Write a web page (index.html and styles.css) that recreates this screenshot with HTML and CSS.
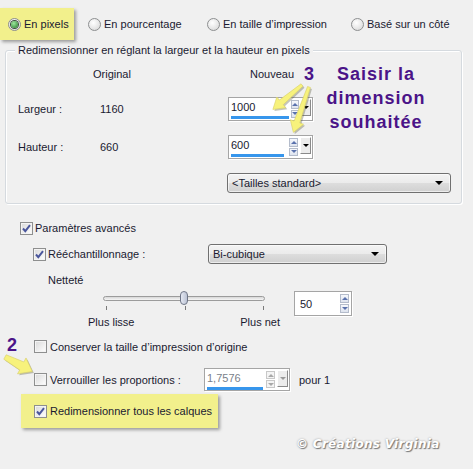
FILE: index.html
```html
<!DOCTYPE html>
<html lang="fr">
<head>
    <meta charset="UTF-8">
    <meta name="viewport" content="width=device-width, initial-scale=1.0">
    <title>Redimensionner</title>
    <link rel="stylesheet" href="styles.css">
</head>
<body>
<div class="dialog">
    <div class="modes">
        <label class="mode mode-on"><span class="radio on"></span>En pixels</label>
        <label class="mode"><span class="radio"></span>En pourcentage</label>
        <label class="mode"><span class="radio"></span>En taille d’impression</label>
        <label class="mode"><span class="radio"></span>Basé sur un côté</label>
    </div>

    <div class="group">
        <div class="group-title">Redimensionner en réglant la largeur et la hauteur en pixels</div>
        <div class="head-row"><span class="col-orig">Original</span><span>Nouveau</span></div>
        <div class="size-row">
            <span class="lbl">Largeur :</span><span class="val">1160</span>
            <div class="spin spin-size">
                <div class="spin-field"><span>1000</span><span class="bar" style="width:58px"></span></div>
                <div class="arrows"><span class="up"></span><span class="dn"></span></div>
                <span class="drop"></span>
            </div>
        </div>
        <div class="size-row row-gap">
            <span class="lbl">Hauteur :</span><span class="val">660</span>
            <div class="spin spin-size">
                <div class="spin-field"><span>600</span><span class="bar" style="width:53px"></span></div>
                <div class="arrows"><span class="up"></span><span class="dn"></span></div>
                <span class="drop"></span>
            </div>
        </div>
        <div class="preset-row">
            <div class="select select-preset">&lt;Tailles standard&gt;<span class="caret"></span></div>
        </div>
    </div>

    <div class="opt opt-adv">
        <span class="check on"><svg viewBox="0 0 11 11"><path d="M2 5.5l2.3 2.6L9 2.2"/></svg></span>Paramètres avancés
    </div>
    <div class="opt opt-resample">
        <span class="opt-label"><span class="check on"><svg viewBox="0 0 11 11"><path d="M2 5.5l2.3 2.6L9 2.2"/></svg></span>Rééchantillonnage :</span>
        <div class="select select-method">Bi-cubique<span class="caret"></span></div>
    </div>
    <div class="opt opt-sharp">Netteté</div>
    <div class="slider-row">
        <div class="slider">
            <div class="track-area">
                <div class="track"></div>
                <span class="thumb"></span>
            </div>
            <div class="ticks"><i></i><i></i><i></i></div>
            <div class="slider-labels"><span>Plus lisse</span><span>Plus net</span></div>
        </div>
        <div class="spin spin-small">
            <div class="spin-field"><span>50</span></div>
            <div class="arrows"><span class="up"></span><span class="dn"></span></div>
        </div>
    </div>
    <div class="opt opt-keep">
        <span class="check"></span>Conserver la taille d’impression d’origine
    </div>
    <div class="opt opt-lock">
        <span class="opt-label"><span class="check"></span>Verrouiller les proportions :</span>
        <div class="spin spin-ratio">
            <div class="spin-field dim"><span>1,7576</span><span class="bar" style="width:56px"></span></div>
            <div class="arrows off"><span class="up"></span><span class="dn"></span></div>
            <span class="drop off"></span>
        </div>
        <span class="pour">pour 1</span>
    </div>
    <div class="opt opt-layers">
        <span class="check on"><svg viewBox="0 0 11 11"><path d="M2 5.5l2.3 2.6L9 2.2"/></svg></span>Redimensionner tous les calques
    </div>
    <div class="watermark">© Créations Virginia</div>

    <!-- annotations over the dialog -->
    <div class="note note3">
        <span class="num">3</span>
        <span class="note-text">Saisir la<br>dimension<br>souhaitée</span>
    </div>
    <div class="note note2">2</div>
    <svg class="arrows-layer" width="473" height="469" viewBox="0 0 473 469">
        <g class="shade" transform="translate(1.5 1.5)">
            <polygon transform="translate(302 85) rotate(140)" points="0,-1.5 27,-3 27,-7 38,0 27,7 27,3 0,1.5"/>
            <polygon transform="translate(309 87) rotate(109)" points="0,-1.5 37,-3 37,-7 48,0 37,7 37,3 0,1.5"/>
            <polygon transform="translate(5 357) rotate(28)" points="0,-2.5 19,-4.5 19,-9 31,0 19,9 19,4.5 0,2.5"/>
        </g>
        <g class="arrow">
            <polygon transform="translate(302 85) rotate(140)" points="0,-1.5 27,-3 27,-7 38,0 27,7 27,3 0,1.5"/>
            <polygon transform="translate(309 87) rotate(109)" points="0,-1.5 37,-3 37,-7 48,0 37,7 37,3 0,1.5"/>
            <polygon transform="translate(5 357) rotate(28)" points="0,-2.5 19,-4.5 19,-9 31,0 19,9 19,4.5 0,2.5"/>
        </g>
    </svg>
</div>
</body>
</html>
```

FILE: styles.css
```css
body {
    margin: 0;
    background: #f0f0f0;
    font-family: "Liberation Sans", Arial, sans-serif;
    font-size: 11px;
    color: #1a1a30;
}
.dialog {
    position: relative;
    width: 473px;
    height: 469px;
    overflow: hidden;
}

/* mode radios */
.modes {
    display: grid;
    grid-template-columns: 88px 119px 144px auto;
    padding-top: 8px;
    height: 32px;
}
.mode {
    display: flex;
    align-items: center;
}
.mode-on {
    width: 74px;
    padding-left: 8px;
    box-sizing: border-box;
    background: #f2f08c;
    box-shadow: 2px 2px 3px rgba(0, 0, 0, 0.35);
}
.radio {
    width: 13px;
    height: 13px;
    margin-right: 3px;
    border: 1px solid #8d8f90;
    border-radius: 50%;
    box-sizing: border-box;
    background: radial-gradient(circle at 40% 35%, #ffffff, #d4d4d4);
    display: flex;
    align-items: center;
    justify-content: center;
}
.radio.on::after {
    content: "";
    width: 7px;
    height: 7px;
    border-radius: 50%;
    background: radial-gradient(circle at 40% 35%, #9ee79e, #1f7a26);
    box-shadow: 0 0 0 1px #3c4c3c;
}

/* group box */
.group {
    margin: 10px 0 0 5px;
    width: 457px;
    box-sizing: border-box;
    border: 1px solid #d5dadf;
    border-radius: 3px;
    box-shadow: inset 1px 1px 0 #fff, 1px 1px 0 #fff;
    padding-bottom: 10px;
}
.group-title {
    display: table;
    margin: -8px 0 0 9px;
    padding: 0 3px;
    line-height: 14px;
    background: #f0f0f0;
}
.head-row {
    display: flex;
    margin-top: 10px;
    padding-left: 87px;
    line-height: 14px;
}
.col-orig {
    width: 157px;
}
.size-row {
    display: flex;
    align-items: center;
    height: 24px;
    margin-top: 16px;
    padding-left: 12px;
}
.size-row.row-gap {
    margin-top: 14px;
}
.lbl {
    width: 82px;
}
.val {
    width: 128px;
}
.preset-row {
    margin-top: 14px;
    padding-left: 221px;
}

/* spin boxes */
.spin {
    display: flex;
    box-sizing: border-box;
    border: 1px solid #a5a5a5;
    background: #fff;
    box-shadow: 1px 1px 0 #fff;
}
.spin-size {
    width: 85px;
    height: 24px;
}
.spin-small {
    width: 58px;
    height: 25px;
    margin-left: 14px;
}
.spin-ratio {
    width: 86px;
    height: 23px;
}
.spin-field {
    flex: 1;
    display: flex;
    flex-direction: column;
    justify-content: center;
    padding: 2px 1px 0 2px;
}
.spin-field span:first-child {
    line-height: 13px;
}
.spin-small .spin-field {
    padding-left: 5px;
}
.spin-field.dim {
    color: #7a7f8a;
}
.bar {
    height: 3px;
    margin-top: 2px;
    background: #3796ec;
}
.arrows {
    display: flex;
    flex-direction: column;
    gap: 1px;
    width: 9px;
    margin: 2px 2px 2px 1px;
}
.arrows span {
    flex: 1;
    border: 1px solid #b4bccb;
    background: linear-gradient(#f6f8fc, #dde3ee);
    display: flex;
    align-items: center;
    justify-content: center;
}
.arrows .up::after {
    content: "";
    border: 3px solid transparent;
    border-top: 0;
    border-bottom: 3px solid #5a72ad;
}
.arrows .dn::after {
    content: "";
    border: 3px solid transparent;
    border-bottom: 0;
    border-top: 3px solid #5a72ad;
}
.arrows.off span {
    border-color: #c8c8c8;
    background: #f4f4f4;
}
.arrows.off .up::after {
    border-bottom-color: #a8a8a8;
}
.arrows.off .dn::after {
    border-top-color: #a8a8a8;
}
.drop {
    width: 11px;
    height: 17px;
    margin: 1px 1px 0 0;
    box-sizing: border-box;
    border: 1px solid #8a8a8a;
    border-top-color: #fff;
    border-left-color: #fff;
    background: #ececec;
    display: flex;
    align-items: center;
    justify-content: center;
}
.drop::after {
    content: "";
    border: 3px solid transparent;
    border-bottom: 0;
    border-top: 3px solid #000;
}
.drop.off::after {
    border-top-color: #9a9a9a;
}

/* dropdowns */
.select {
    display: flex;
    align-items: center;
    height: 20px;
    box-sizing: border-box;
    padding: 0 7px 0 4px;
    border: 1px solid #707070;
    border-radius: 3px;
    background: linear-gradient(#f3f3f3 0%, #ebebeb 50%, #dddddd 51%, #d0d0d0 100%);
    box-shadow: inset 0 0 0 1px rgba(255, 255, 255, 0.6);
}
.select-preset {
    width: 224px;
}
.select-method {
    width: 179px;
}
.caret {
    margin-left: auto;
    border: 4px solid transparent;
    border-bottom: 0;
    border-top: 4px solid #000;
}

/* checkbox rows */
.opt {
    display: flex;
    align-items: center;
}
.check {
    width: 13px;
    height: 13px;
    flex-shrink: 0;
    margin-right: 3px;
    box-sizing: border-box;
    border: 1px solid #8e8f8f;
    background: linear-gradient(135deg, #d9d9d9, #ffffff);
    box-shadow: inset 0 0 0 1px #f4f4f4;
}
.check svg {
    display: block;
    width: 11px;
    height: 11px;
}
.check path {
    fill: none;
    stroke: #4a569c;
    stroke-width: 2;
}
.opt-adv {
    margin-top: 14px;
    height: 20px;
    padding-left: 20px;
}
.opt-adv .check {
    margin-right: 2px;
}
.opt-resample {
    margin-top: 6px;
    height: 20px;
    padding-left: 33px;
}
.opt-label {
    display: flex;
    align-items: center;
}
.opt-resample .opt-label {
    width: 175px;
}
.opt-resample .check {
    margin-right: 2px;
}
.opt-sharp {
    margin-top: 9px;
    height: 14px;
    padding-left: 48px;
}

/* slider */
.slider-row {
    display: flex;
    align-items: flex-start;
    margin-top: 4px;
    padding-left: 88px;
}
.slider {
    width: 192px;
}
.track-area {
    position: relative;
    height: 14px;
    padding: 0 15px;
    display: flex;
    align-items: center;
}
.track {
    flex: 1;
    height: 5px;
    box-sizing: border-box;
    border: 1px solid #9c9c9c;
    border-radius: 3px;
    background: linear-gradient(#d8d8d8, #f6f6f6);
}
.thumb {
    position: absolute;
    left: 92px;
    top: 0;
    width: 8px;
    height: 14px;
    box-sizing: border-box;
    border: 1px solid #6e7586;
    border-radius: 4px;
    background: linear-gradient(90deg, #e4e8f2, #bcc3d4);
}
.ticks {
    display: flex;
    justify-content: space-between;
    height: 4px;
    margin-top: 1px;
    padding: 0 16px 0 18px;
}
.ticks i {
    width: 1px;
    background: #7a7a7a;
}
.slider-labels {
    display: flex;
    justify-content: space-between;
    margin-top: 5px;
    line-height: 14px;
}

.opt-keep {
    margin-top: 11px;
    height: 13px;
    padding-left: 34px;
}
.opt-lock {
    margin-top: 15px;
    height: 23px;
    padding-left: 34px;
}
.opt-lock .opt-label {
    width: 170px;
}
.pour {
    margin-left: 9px;
}
.opt-layers {
    margin: 3px 0 0 21px;
    width: 197px;
    height: 34px;
    padding-left: 13px;
    box-sizing: border-box;
    background: #f2f08c;
    box-shadow: 2px 2px 3px rgba(0, 0, 0, 0.35);
}

.watermark {
    margin-top: 9px;
    padding-left: 296px;
    font-family: "DejaVu Sans", sans-serif;
    font-size: 12px;
    font-weight: bold;
    font-style: italic;
    letter-spacing: 0.3px;
    color: #fff;
    text-shadow: 1px 1px 1px #777, 0 0 2px #999;
}

/* annotations */
.note {
    position: absolute;
    font-family: "Liberation Sans", Arial, sans-serif;
    font-weight: bold;
    color: #4b1488;
}
.note3 {
    left: 304px;
    top: 62px;
    display: flex;
    align-items: flex-start;
    font-size: 18px;
    line-height: 24px;
}
.note-text {
    width: 106px;
    margin-left: 9px;
    text-align: center;
    letter-spacing: 1px;
}
.note2 {
    left: 7px;
    top: 335px;
    font-size: 18px;
    line-height: 20px;
}
.arrows-layer {
    position: absolute;
    left: 0;
    top: 0;
    pointer-events: none;
}
.arrows-layer .shade polygon {
    fill: rgba(90, 90, 60, 0.35);
}
.arrows-layer .arrow polygon {
    fill: #f7f27c;
    stroke: #d9d16a;
    stroke-width: 0.6;
}
```
